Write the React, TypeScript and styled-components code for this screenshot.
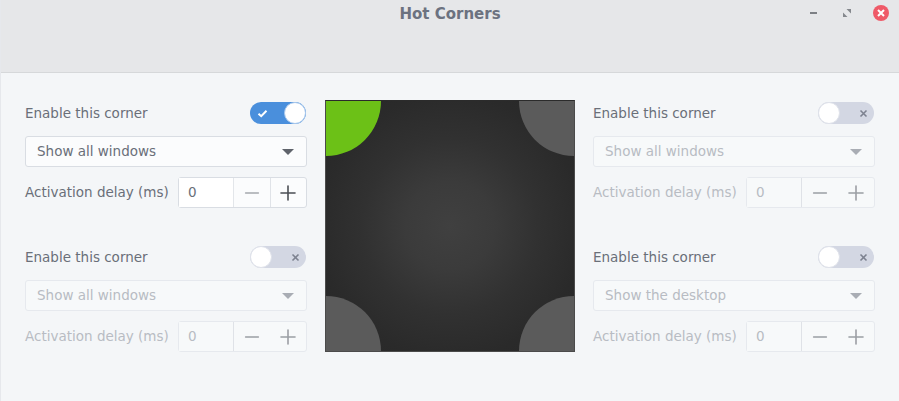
import styled, { createGlobalStyle } from 'styled-components';
import { FiMinus, FiPlus } from 'react-icons/fi';

const GlobalStyle = createGlobalStyle`
	html, body {
		margin: 0;
		padding: 0;
		background: #f4f6f8;
		font-family: 'DejaVu Sans', sans-serif;
	}
`;

const Window = styled.div`
	width: 899px;
	height: 401px;
	overflow: hidden;
	background: #f4f6f8;
	border-left: 1px solid #e6e8ec;
	box-sizing: border-box;
`;

const Header = styled.header`
	height: 73px;
	box-sizing: border-box;
	background: #e6e7e9;
	border-bottom: 1px solid #d6d8da;
	display: grid;
	grid-template-columns: 1fr auto 1fr;
	align-items: start;
	padding-top: 4px;
`;

const Title = styled.h1`
	grid-column: 2;
	margin: 0;
	font-size: 15px;
	line-height: 20px;
	font-weight: 700;
	color: #6c7280;
`;

const WindowControls = styled.div`
	grid-column: 3;
	justify-self: end;
	display: flex;
	align-items: center;
	gap: 25px;
	margin-right: 10px;
	height: 18px;
`;

const CloseButton = styled.span`
	width: 16px;
	height: 16px;
	margin-left: -3px;
	border-radius: 50%;
	background: #ef5a68;
	display: flex;
	align-items: center;
	justify-content: center;
`;

const Content = styled.main`
	display: grid;
	grid-template-columns: 282px 250px 282px;
	column-gap: 18px;
	padding: 27px 0 0 24px;
`;

const Column = styled.div`
	display: flex;
	flex-direction: column;
	gap: 36px;
`;

const CornerPanel = styled.section`
	display: flex;
	flex-direction: column;
	width: 282px;
`;

const SwitchRow = styled.div`
	display: flex;
	align-items: center;
	justify-content: space-between;
	height: 26px;
	margin-bottom: 10px;
	padding-right: 1px;
`;

const Label = styled.span<{ $muted?: boolean; $raised?: boolean }>`
	font-size: 13.5px;
	color: ${props => (props.$muted ? '#b8bcc3' : '#6a6f79')};
	white-space: nowrap;
	padding-bottom: ${props => (props.$raised ? '2px' : '0')};
`;

const Switch = styled.div<{ $on?: boolean }>`
	position: relative;
	width: 56px;
	height: 22px;
	border-radius: 11px;
	background: ${props => (props.$on ? '#4a8fdc' : '#d3d7e3')};
	display: flex;
	align-items: center;
	justify-content: ${props => (props.$on ? 'flex-start' : 'flex-end')};
	padding: ${props => (props.$on ? '0 0 0 1px' : '0 6px 0 0')};
	box-sizing: border-box;
`;

const Knob = styled.span<{ $on?: boolean }>`
	position: absolute;
	top: 0;
	${props => (props.$on ? 'right: 0;' : 'left: 0;')}
	width: 22px;
	height: 22px;
	box-sizing: border-box;
	border-radius: 50%;
	background: #fff;
	border: 1px solid ${props => (props.$on ? '#a9c8ec' : '#dfe2ea')};
`;

const Select = styled.div<{ $muted?: boolean }>`
	height: 31px;
	box-sizing: border-box;
	display: flex;
	align-items: center;
	justify-content: space-between;
	padding: 0 12px 2px 11px;
	background: ${props => (props.$muted ? '#f7f9fa' : '#fbfcfd')};
	border: 1px solid ${props => (props.$muted ? '#e6e9ee' : '#d9dde3')};
	border-radius: 3px;
	font-size: 13.5px;
	color: ${props => (props.$muted ? '#b8bcc3' : '#6a6f79')};
`;

const Arrow = styled.span<{ $muted?: boolean }>`
	width: 0;
	height: 0;
	margin-top: 2px;
	border-left: 6px solid transparent;
	border-right: 6px solid transparent;
	border-top: 6px solid ${props => (props.$muted ? '#a9adb4' : '#5f636b')};
`;

const DelayRow = styled.div`
	display: flex;
	align-items: center;
	justify-content: space-between;
	margin-top: 10px;
`;

const Spinner = styled.div<{ $muted?: boolean }>`
	width: 129px;
	height: 31px;
	box-sizing: border-box;
	display: flex;
	background: ${props => (props.$muted ? '#f7f9fa' : '#fbfcfd')};
	border: 1px solid ${props => (props.$muted ? '#e6e9ee' : '#d9dde3')};
	border-radius: 3px;
`;

const SpinValue = styled.span<{ $muted?: boolean }>`
	width: 55px;
	padding: 0 0 2px 9px;
	box-sizing: border-box;
	display: flex;
	align-items: center;
	font-size: 13.5px;
	color: ${props => (props.$muted ? '#b8bcc3' : '#6a6f79')};
	background: ${props => (props.$muted ? '#f7f9fa' : '#ffffff')};
	border-right: 1px solid ${props => (props.$muted ? '#dfe2e7' : '#e3e6ea')};
`;

const SpinButton = styled.span<{ $divider?: boolean; $color: string }>`
	flex: 1;
	display: flex;
	align-items: center;
	justify-content: center;
	color: ${props => props.$color};
	border-left: ${props => (props.$divider ? '1px solid #e0e3e8' : 'none')};
`;

const Preview = styled.div`
	width: 250px;
	height: 252px;
	box-sizing: border-box;
	border: 1px solid #4b4b4b;
	border-top-color: #2b2b2b;
	background: radial-gradient(circle at 50% 50%, #404040 0%, #3b3b3b 25%, #313131 50%, #2a2a2a 75%, #272727 100%);
	position: relative;
	overflow: hidden;
`;

const Corner = styled.span<{ $v: 'top' | 'bottom'; $h: 'left' | 'right'; $active?: boolean }>`
	position: absolute;
	${props => props.$v}: -55px;
	${props => props.$h}: -55px;
	width: 110px;
	height: 110px;
	border-radius: 50%;
	background: ${props => (props.$active ? '#6cc117' : '#5b5b5b')};
`;

const SwitchMark = styled.svg<{ $on?: boolean }>`
	margin-left: ${props => (props.$on ? '6px' : '0')};
`;

type PanelProps = {
	action: string;
	on?: boolean;
	muted?: boolean;
};

function CornerControls({ action, on, muted }: PanelProps) {
	return (
		<CornerPanel>
			<SwitchRow>
				<Label>Enable this corner</Label>
				<Switch $on={on}>
					{on ? (
						<SwitchMark $on width='11' height='9' viewBox='0 0 11 9' fill='none'>
							<path d='M1.5 4.8 L4.2 7.2 L9.5 1.8' stroke='#fff' strokeWidth='2' />
						</SwitchMark>
					) : (
						<SwitchMark width='9' height='9' viewBox='0 0 9 9' fill='none'>
							<path d='M1.5 1.5 L7.5 7.5 M7.5 1.5 L1.5 7.5' stroke='#7d8290' strokeWidth='1.6' />
						</SwitchMark>
					)}
					<Knob $on={on} />
				</Switch>
			</SwitchRow>
			<Select $muted={muted}>
				{action}
				<Arrow $muted={muted} />
			</Select>
			<DelayRow>
				<Label $muted={muted} $raised>Activation delay (ms)</Label>
				<Spinner $muted={muted}>
					<SpinValue $muted={muted}>0</SpinValue>
					<SpinButton $color={muted ? '#9b9ea4' : '#a5a8ad'}>
						<FiMinus size={22} strokeWidth={1.6} />
					</SpinButton>
					<SpinButton $divider={!muted} $color={muted ? '#9b9ea4' : '#4b4e54'}>
						<FiPlus size={24} strokeWidth={1.6} />
					</SpinButton>
				</Spinner>
			</DelayRow>
		</CornerPanel>
	);
}

function App() {
	return (
		<Window>
			<GlobalStyle />
			<Header>
				<Title>Hot Corners</Title>
				<WindowControls>
					<svg width='8' height='8' viewBox='0 0 8 8'>
						<rect x='0' y='3' width='7' height='2' fill='#7d8085' />
					</svg>
					<svg width='8' height='8' viewBox='0 0 8 8'>
						<path d='M3.5 0 H8 V4.5 Z M0 3.5 V8 H4.5 Z' fill='#85888d' />
					</svg>
					<CloseButton>
						<svg width='8' height='8' viewBox='0 0 8 8' fill='none'>
							<path d='M1 1 L7 7 M7 1 L1 7' stroke='#fff' strokeWidth='2' />
						</svg>
					</CloseButton>
				</WindowControls>
			</Header>
			<Content>
				<Column>
					<CornerControls action='Show all windows' on />
					<CornerControls action='Show all windows' muted />
				</Column>
				<Preview>
					<Corner $v='top' $h='left' $active />
					<Corner $v='top' $h='right' />
					<Corner $v='bottom' $h='left' />
					<Corner $v='bottom' $h='right' />
				</Preview>
				<Column>
					<CornerControls action='Show all windows' muted />
					<CornerControls action='Show the desktop' muted />
				</Column>
			</Content>
		</Window>
	);
}

export default App;
